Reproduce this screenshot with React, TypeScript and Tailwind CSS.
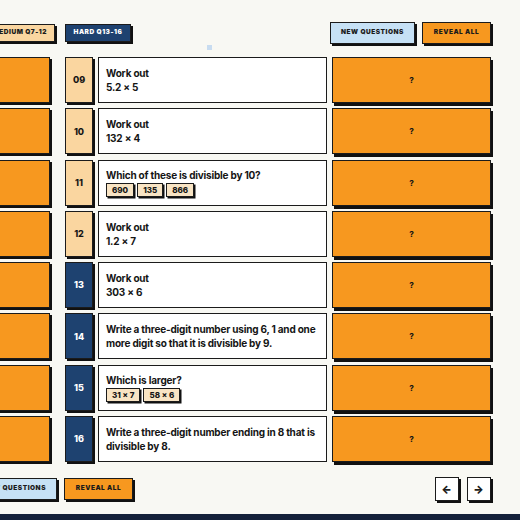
import React from "react";

type Row = {
  n: string;
  hard?: boolean;
  lines?: string[];
  chips?: string[];
};

const rows: Row[] = [
  { n: "09", lines: ["Work out", "5.2 × 5"] },
  { n: "10", lines: ["Work out", "132 × 4"] },
  { n: "11", lines: ["Which of these is divisible by 10?"], chips: ["690", "135", "866"] },
  { n: "12", lines: ["Work out", "1.2 × 7"] },
  { n: "13", hard: true, lines: ["Work out", "303 × 6"] },
  {
    n: "14",
    hard: true,
    lines: ["Write a three-digit number using 6, 1 and one", "more digit so that it is divisible by 9."],
  },
  { n: "15", hard: true, lines: ["Which is larger?"], chips: ["31 × 7", "58 × 6"] },
  {
    n: "16",
    hard: true,
    lines: ["Write a three-digit number ending in 8 that is", "divisible by 8."],
  },
];

const box = "border-[1.5px] border-[#1b1b1b]";

function Btn({ children, className }: { children: React.ReactNode; className: string }) {
  return (
    <button
      type="button"
      className={`${box} shadow-[2px_2px_0_#111] flex items-center justify-center text-[6.5px] font-black uppercase tracking-[0.08em] text-[#1b1b1b] whitespace-nowrap ${className}`}
    >
      {children}
    </button>
  );
}

export default function App() {
  return (
    <div
      className="relative w-[520px] h-[520px] overflow-hidden bg-[#f8f8f3] text-[#151515]"
      style={{ fontFamily: "Inter, 'Noto Sans', sans-serif" }}
    >
      {/* level tabs + actions */}
      <div className="flex items-center justify-between pt-[22px] h-[44px]">
        <div className="flex items-center gap-[10px] -ml-[30px]">
          <Btn className="w-[85px] h-[18px] bg-[#fad6a0] justify-end pr-[7px]">Medium Q7-12</Btn>
          <Btn className="w-[66px] h-[18px] bg-[#1e4270] text-white">Hard Q13-16</Btn>
        </div>
        <div className="flex items-center gap-[7px] mr-[29px]">
          <Btn className="w-[85px] h-[22px] bg-[#c6e1f5]">New Questions</Btn>
          <Btn className="w-[69px] h-[22px] bg-[#f7981f]">Reveal All</Btn>
        </div>
      </div>
      <div className="w-[5px] h-[5px] bg-[#c8dcf0] ml-[207px] mt-[1px]" />

      {/* question rows */}
      <div className="flex flex-col gap-[5.3px] mt-[7px]">
        {rows.map((r) => (
          <div key={r.n} className="flex h-[46px]">
            <div className={`${box} w-[80px] -ml-[30px] bg-[#f7981f] shadow-[2px_2px_0_#111]`} />
            <div
              className={`${box} w-[28px] ml-[15px] flex items-center justify-center text-[9px] font-extrabold shadow-[2px_2px_0_#111] ${
                r.hard ? "bg-[#1e4270] text-white" : "bg-[#fad6a0]"
              }`}
            >
              {r.n}
            </div>
            <div
              className={`${box} w-[229px] ml-[5px] bg-white px-[7px] flex flex-col justify-center text-[10px] font-bold tracking-[-0.02em] leading-[14px]`}
            >
              {r.lines?.map((l) => (
                <div key={l} className="whitespace-nowrap">
                  {l}
                </div>
              ))}
              {r.chips && (
                <div className="flex gap-[3px] mt-[1px] mb-[1px] tracking-normal">
                  {r.chips.map((c) => (
                    <span
                      key={c}
                      className="border-[1.5px] border-[#1b1b1b] bg-[#f8e4c4] shadow-[1.5px_1.5px_0_#111] px-[5px] h-[14px] flex items-center text-[8px] font-extrabold leading-none"
                    >
                      {c}
                    </span>
                  ))}
                </div>
              )}
            </div>
            <div
              className={`${box} w-[159px] ml-[5px] bg-[#f7981f] shadow-[2px_3px_0_#111] flex items-center justify-center text-[8px] font-extrabold`}
            >
              ?
            </div>
          </div>
        ))}
      </div>

      {/* footer controls */}
      <div className="flex items-center justify-between mt-[15px]">
        <div className="flex items-center gap-[7px] -ml-[30px]">
          <Btn className="w-[87px] h-[22px] bg-[#c6e1f5] justify-end pr-[10px]">New Questions</Btn>
          <Btn className="w-[69px] h-[22px] bg-[#f7981f]">Reveal All</Btn>
        </div>
        <div className="flex items-center gap-[8px] mr-[29px]">
          <Btn className="w-[24px] h-[24px] bg-white text-[11px]">←</Btn>
          <Btn className="w-[24px] h-[24px] bg-white text-[11px]">→</Btn>
        </div>
      </div>

      <div className="absolute left-0 right-0 bottom-0 h-[6px] bg-[#15213a]" />
    </div>
  );
}
